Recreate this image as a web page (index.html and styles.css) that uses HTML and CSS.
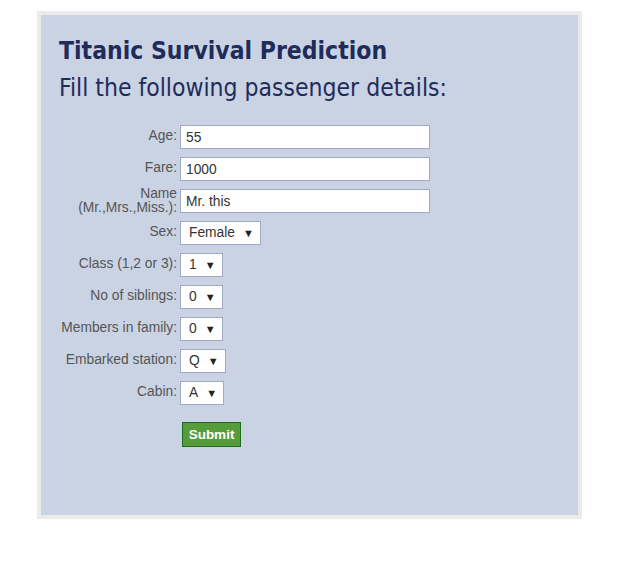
FILE: index.html
```html
<!DOCTYPE html>
<html>
<head>
<meta charset="utf-8">
<link rel="stylesheet" href="styles.css">
</head>
<body>
<div class="card">
  <h1 class="title">Titanic Survival Prediction</h1>
  <h2 class="subtitle">Fill the following passenger details:</h2>
  <form class="form">
    <label class="lbl">Age:</label>
    <div class="field"><input class="txt" type="text" value="55"></div>
    <label class="lbl">Fare:</label>
    <div class="field"><input class="txt" type="text" value="1000"></div>
    <label class="lbl two">Name<br>(Mr.,Mrs.,Miss.):</label>
    <div class="field"><input class="txt" type="text" value="Mr. this"></div>
    <label class="lbl">Sex:</label>
    <div class="field"><span class="sel">Female<span class="arr">▼</span></span></div>
    <label class="lbl">Class (1,2 or 3):</label>
    <div class="field"><span class="sel">1<span class="arr">▼</span></span></div>
    <label class="lbl">No of siblings:</label>
    <div class="field"><span class="sel">0<span class="arr">▼</span></span></div>
    <label class="lbl">Members in family:</label>
    <div class="field"><span class="sel">0<span class="arr">▼</span></span></div>
    <label class="lbl">Embarked station:</label>
    <div class="field"><span class="sel">Q<span class="arr">▼</span></span></div>
    <label class="lbl">Cabin:</label>
    <div class="field"><span class="sel">A<span class="arr">▼</span></span></div>
    <span></span>
    <div class="field btnrow"><button class="submit" type="button">Submit</button></div>
  </form>
</div>
</body>
</html>
```
FILE: styles.css
```css
html, body { margin: 0; padding: 0; background: #fff; }
body { padding: 11px 0 0 37px; }
.card {
  width: 537px;
  height: 500px;
  background: #cad3e3;
  border: 4px solid #ebebeb;
  box-sizing: content-box;
  padding: 0;
}
.title {
  margin: 0;
  padding: 22px 0 0 18px;
  font-family: "DejaVu Sans Condensed", "DejaVu Sans", sans-serif;
  font-weight: bold;
  font-size: 24.5px;
  line-height: 28px;
  color: #1f2c5a;
}
.subtitle {
  margin: 0;
  padding: 8px 0 0 18px;
  font-family: "DejaVu Sans Condensed", "DejaVu Sans", sans-serif;
  font-weight: normal;
  font-size: 24.5px;
  line-height: 30px;
  color: #1f2c5a;
}
.form {
  display: grid;
  grid-template-columns: 118px auto;
  column-gap: 3px;
  row-gap: 8px;
  padding: 22px 0 0 18px;
  font-family: "Liberation Sans", Arial, sans-serif;
}
.lbl {
  text-align: right;
  font-size: 13.8px;
  line-height: 14px;
  color: #555;
  padding-top: 4px;
  white-space: nowrap;
}
.lbl.two { padding-top: 0; margin-top: -2px; height: 24px; line-height: 14px; }
.field { display: flex; height: 24px; }
.txt {
  width: 250px;
  height: 24px;
  box-sizing: border-box;
  border: 1px solid #9eabc7;
  background: #fff;
  padding: 0 5px;
  margin: 0;
  font-family: "Liberation Sans", Arial, sans-serif;
  font-size: 13.8px;
  color: #333;
  outline: none;
}
.sel {
  display: inline-flex;
  align-items: center;
  height: 24px;
  box-sizing: border-box;
  border: 1px solid #9eabc7;
  background: #fff;
  padding: 0 6px 1px 8px;
  font-size: 13.8px;
  color: #333;
}
.arr { font-size: 11px; margin-left: 8px; color: #222; }
.btnrow { padding-top: 9px; height: auto; padding-left: 2px; }
.submit {
  width: 59px;
  height: 25px;
  background: #579c3b;
  border: 1px solid #1e6b1e;
  color: #fff;
  font-family: "Liberation Sans", Arial, sans-serif;
  font-weight: bold;
  font-size: 13.5px;
  padding: 0;
  margin: 0;
}
```
